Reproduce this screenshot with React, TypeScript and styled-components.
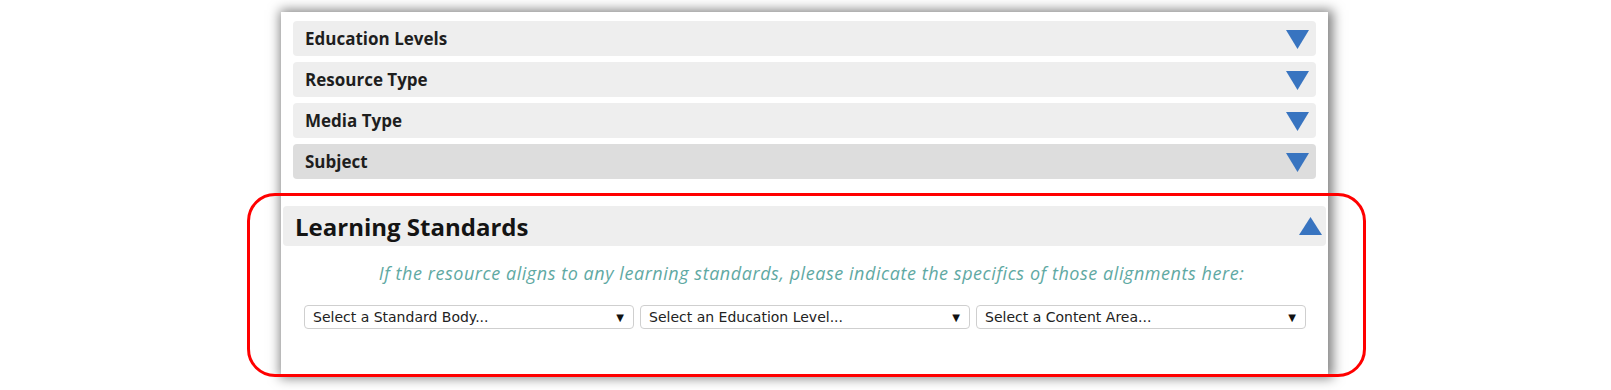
import React from "react";
import styled, { createGlobalStyle } from "styled-components";

const GlobalStyle = createGlobalStyle`
  html, body {
    margin: 0;
    padding: 0;
    background: #ffffff;
  }
  body {
    font-family: "Open Sans", Lato, Arial, sans-serif;
  }
  * { box-sizing: border-box; }
`;

const Page = styled.div`
  position: relative;
  width: 1611px;
  height: 390px;
  overflow: hidden;
  padding-top: 12px;
`;

const Panel = styled.div`
  margin-left: 281px;
  width: 1047px;
  height: 362px;
  background: #ffffff;
  box-shadow: 2px 1px 11px 3px rgba(0, 0, 0, 0.5);
  padding: 9px 2px 0 2px;
`;

const AccordionList = styled.div`
  display: flex;
  flex-direction: column;
  gap: 6px;
  margin: 0 10px;
`;

const Bar = styled.div<{ $active?: boolean }>`
  height: 35px;
  border-radius: 4px;
  background: ${(p) => (p.$active ? "#dddddd" : "#eeeeee")};
  display: flex;
  align-items: center;
  justify-content: space-between;
  padding: 0 7px 0 12px;
`;

const BarLabel = styled.span`
  font-family: "Open Sans", Lato, sans-serif;
  font-weight: 700;
  font-size: 17px;
  color: #1e1e1e;
`;

const Section = styled.section`
  margin-top: 27px;
`;

const SectionHeader = styled.div`
  height: 40px;
  border-radius: 4px;
  background: #eeeeee;
  display: flex;
  align-items: center;
  justify-content: space-between;
  padding: 0 4px 0 12px;
`;

const SectionTitle = styled.h2`
  margin: 0;
  font-family: "Open Sans", Lato, sans-serif;
  font-weight: 700;
  font-size: 24px;
  color: #141414;
`;

const Intro = styled.p`
  margin: 16px 0 0 0;
  padding-left: 14px;
  text-align: center;
  font-family: "Open Sans", Lato, sans-serif;
  font-style: italic;
  font-size: 18px;
  letter-spacing: 0.55px;
  line-height: 22px;
  color: #5fa9a3;
`;

const SelectRow = styled.div`
  margin-top: 21px;
  display: grid;
  grid-template-columns: repeat(3, 1fr);
  gap: 6px;
  padding: 0 20px 0 21px;
`;

const SelectBox = styled.div`
  height: 24px;
  border: 1px solid #cfcfcf;
  border-radius: 4px;
  background: #ffffff;
  display: flex;
  align-items: center;
  justify-content: space-between;
  padding: 0 9px 0 8px;
  font-family: "DejaVu Sans", Verdana, sans-serif;
  font-size: 14px;
  color: #222222;
`;

const SelectArrow = styled.span`
  font-size: 10px;
  color: #111111;
`;

const Highlight = styled.div`
  position: absolute;
  left: 247px;
  top: 193px;
  width: 1119px;
  height: 184px;
  border: 3px solid #ff0000;
  border-radius: 28px;
  pointer-events: none;
`;

const Triangle = ({ up }: { up?: boolean }) => (
  <svg width="23" height="20" viewBox="0 0 23 20" aria-hidden="true">
    <polygon
      points={up ? "11.5,1 0,19 23,19" : "0,1 23,1 11.5,20"}
      fill="#3874c0"
    />
  </svg>
);

const items = [
  { label: "Education Levels" },
  { label: "Resource Type" },
  { label: "Media Type" },
  { label: "Subject", active: true },
];

const selects = [
  "Select a Standard Body...",
  "Select an Education Level...",
  "Select a Content Area...",
];

export default function App() {
  return (
    <>
      <GlobalStyle />
      <Page>
        <Panel>
          <AccordionList>
            {items.map((it) => (
              <Bar key={it.label} $active={it.active}>
                <BarLabel>{it.label}</BarLabel>
                <Triangle />
              </Bar>
            ))}
          </AccordionList>
          <Section>
            <SectionHeader>
              <SectionTitle>Learning Standards</SectionTitle>
              <Triangle up />
            </SectionHeader>
            <Intro>
              If the resource aligns to any learning standards, please indicate the specifics of those alignments here:
            </Intro>
            <SelectRow>
              {selects.map((s) => (
                <SelectBox key={s}>
                  <span>{s}</span>
                  <SelectArrow>▼</SelectArrow>
                </SelectBox>
              ))}
            </SelectRow>
          </Section>
        </Panel>
        <Highlight />
      </Page>
    </>
  );
}
